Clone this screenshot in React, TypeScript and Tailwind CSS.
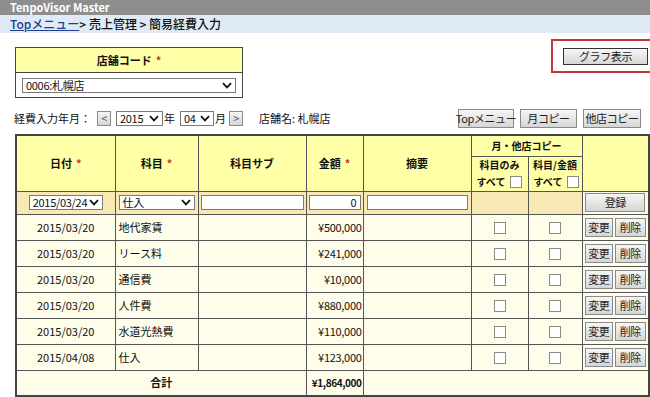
import React from 'react';

const rows = [
  { date: '2015/03/20', item: '地代家賃', amount: '¥500,000' },
  { date: '2015/03/20', item: 'リース料', amount: '¥241,000' },
  { date: '2015/03/20', item: '通信費', amount: '¥10,000' },
  { date: '2015/03/20', item: '人件費', amount: '¥880,000' },
  { date: '2015/03/20', item: '水道光熱費', amount: '¥110,000' },
  { date: '2015/04/08', item: '仕入', amount: '¥123,000' },
];

const Chevron: React.FC = () => (
  <svg width="10" height="7" viewBox="0 0 10 7" className="shrink-0">
    <path d="M1 1.2 L5 5.4 L9 1.2" fill="none" stroke="#111" strokeWidth="1.7" />
  </svg>
);

const Select: React.FC<{ value: string; className?: string }> = ({ value, className }) => (
  <div className={`flex items-center justify-between gap-[2px] bg-white border border-[#7a7a7a] pl-[3px] pr-[3px] text-[11px] leading-none whitespace-nowrap tracking-[-0.3px] ${className ?? ''}`}>
    <span>{value}</span>
    <Chevron />
  </div>
);

const Btn: React.FC<{ label: string; className?: string }> = ({ label, className }) => (
  <div className={`flex items-center justify-center bg-gradient-to-b from-[#f6f6f6] to-[#d6d6d6] border border-[#8a8a8a] text-[11px] leading-none text-[#222] whitespace-nowrap tracking-[-0.4px] ${className ?? ''}`}>
    {label}
  </div>
);

const Check: React.FC = () => <span className="inline-block w-[12px] h-[12px] bg-white border border-[#8a8a8a] align-middle" />;

const Req: React.FC = () => <span className="text-[#c8322a] ml-1">*</span>;

const cell = 'border border-[#555] p-0 whitespace-nowrap';

const App: React.FC = () => {
  return (
    <div className="w-[650px] h-[397px] overflow-hidden bg-white text-[#111] text-[11px] leading-none font-['Noto_Sans_CJK_JP','Noto_Sans',sans-serif]">
      <div className="h-[15px] bg-[#8e8e8e] text-white text-[11px] font-bold leading-[15px] pl-[10px]">TenpoVisor Master</div>
      <div className="h-[18px] bg-[#dfeaf6] leading-[18px] pl-[10px] text-[12px] font-medium">
        <span className="text-[#1c3f94] underline">Topメニュー</span>
        <span>&gt; 売上管理 &gt; 簡易経費入力</span>
      </div>

      <div className="flex items-start justify-between pl-[15px] pt-[6px]">
        <div className="w-[228px] mt-[8px] border border-[#444]">
          <div className="h-[25px] bg-[#ffffa8] flex items-center justify-center font-bold text-[11px] border-b border-[#444]">
            店舗コード<Req />
          </div>
          <div className="h-[24px] bg-white flex items-center px-[6px]">
            <Select value="0006:札幌店" className="w-full h-[15px]" />
          </div>
        </div>
        <div className="w-[99px] h-[34px] border-2 border-r-0 border-[#c2383a] flex items-center pl-[10px]">
          <Btn label="グラフ表示" className="w-[85px] h-[17px] border-[#333]" />
        </div>
      </div>

      <div className="flex items-center h-[20px] mt-[10px] pl-[14px] pr-[9px] whitespace-nowrap">
        <span>経費入力年月：</span>
        <Btn label="<" className="w-[14px] h-[15px] ml-[6px] text-[#555]" />
        <Select value="2015" className="w-[47px] h-[15px] ml-[5px]" />
        <span className="ml-[1px]">年</span>
        <Select value="04" className="w-[34px] h-[15px] ml-[5px]" />
        <span className="ml-[1px]">月</span>
        <Btn label=">" className="w-[14px] h-[15px] ml-[3px] text-[#555]" />
        <span className="ml-[16px]">店舗名: 札幌店</span>
        <div className="ml-auto flex gap-[6px]">
          <Btn label="Topメニュー" className="w-[56px] h-[19px]" />
          <Btn label="月コピー" className="w-[57px] h-[19px]" />
          <Btn label="他店コピー" className="w-[58px] h-[19px]" />
        </div>
      </div>

      <table className="ml-[15px] mt-[6px] border-collapse border-2 border-[#444] table-fixed w-[633px]">
        <colgroup>
          <col className="w-[99px]" />
          <col className="w-[83px]" />
          <col className="w-[108px]" />
          <col className="w-[57px]" />
          <col className="w-[108px]" />
          <col className="w-[57px]" />
          <col className="w-[54px]" />
          <col className="w-[67px]" />
        </colgroup>
        <thead className="bg-[#ffffa8] font-bold text-[11px]">
          <tr className="h-[21px]">
            <th rowSpan={2} className={cell}>日付<Req /></th>
            <th rowSpan={2} className={cell}>科目<Req /></th>
            <th rowSpan={2} className={cell}>科目サブ</th>
            <th rowSpan={2} className={cell}>金額<Req /></th>
            <th rowSpan={2} className={cell}>摘要</th>
            <th colSpan={2} className={`${cell} text-[10px]`}>月・他店コピー</th>
            <th rowSpan={2} className={cell}></th>
          </tr>
          <tr className="h-[35px]">
            <th className={`${cell} text-[10px]`}>
              <div className="h-[16px] flex items-center justify-center">科目のみ</div>
              <div className="h-[17px] flex items-center pl-[5px] gap-[5px]">すべて <Check /></div>
            </th>
            <th className={`${cell} text-[10px]`}>
              <div className="h-[16px] flex items-center justify-center">科目/金額</div>
              <div className="h-[17px] flex items-center pl-[5px] gap-[5px]">すべて <Check /></div>
            </th>
          </tr>
        </thead>
        <tbody>
          <tr className="h-[23px] bg-[#f8e9b4]">
            <td className={cell}><div className="flex justify-center"><Select value="2015/03/24" className="w-[74px] h-[15px]" /></div></td>
            <td className={cell}><div className="flex px-[3px]"><Select value="仕入" className="w-full h-[15px]" /></div></td>
            <td className={cell}><div className="px-[2px]"><div className="h-[15px] bg-white border border-[#7a7a7a]" /></div></td>
            <td className={cell}><div className="px-[2px]"><div className="h-[15px] bg-white border border-[#7a7a7a] text-right pr-[3px] leading-[13px]">0</div></div></td>
            <td className={cell}><div className="px-[3px]"><div className="h-[15px] bg-white border border-[#7a7a7a]" /></div></td>
            <td className={cell}></td>
            <td className={cell}></td>
            <td className={`${cell} bg-[#fdfdea]`}><div className="flex justify-center"><Btn label="登録" className="w-[60px] h-[19px]" /></div></td>
          </tr>
          {rows.map((r, i) => (
            <tr key={i} className="h-[26px] bg-[#fdfdea]">
              <td className={`${cell} text-center`}>{r.date}</td>
              <td className={`${cell} pl-[3px]`}>{r.item}</td>
              <td className={cell}></td>
              <td className={`${cell} text-right pr-[1px] tracking-[-0.3px]`}>{r.amount}</td>
              <td className={cell}></td>
              <td className={`${cell} text-center`}><Check /></td>
              <td className={`${cell} text-center`}><Check /></td>
              <td className={cell}>
                <div className="flex justify-center gap-[2px]">
                  <Btn label="変更" className="w-[28px] h-[19px]" />
                  <Btn label="削除" className="w-[31px] h-[19px]" />
                </div>
              </td>
            </tr>
          ))}
          <tr className="h-[26px] bg-[#fdfdea] font-bold">
            <td colSpan={3} className={`${cell} text-center`}>合計</td>
            <td className={`${cell} text-right pr-[1px] text-[10px] tracking-[-0.4px]`}>¥1,864,000</td>
            <td colSpan={4} className={cell}></td>
          </tr>
        </tbody>
      </table>
    </div>
  );
};

export default App;
